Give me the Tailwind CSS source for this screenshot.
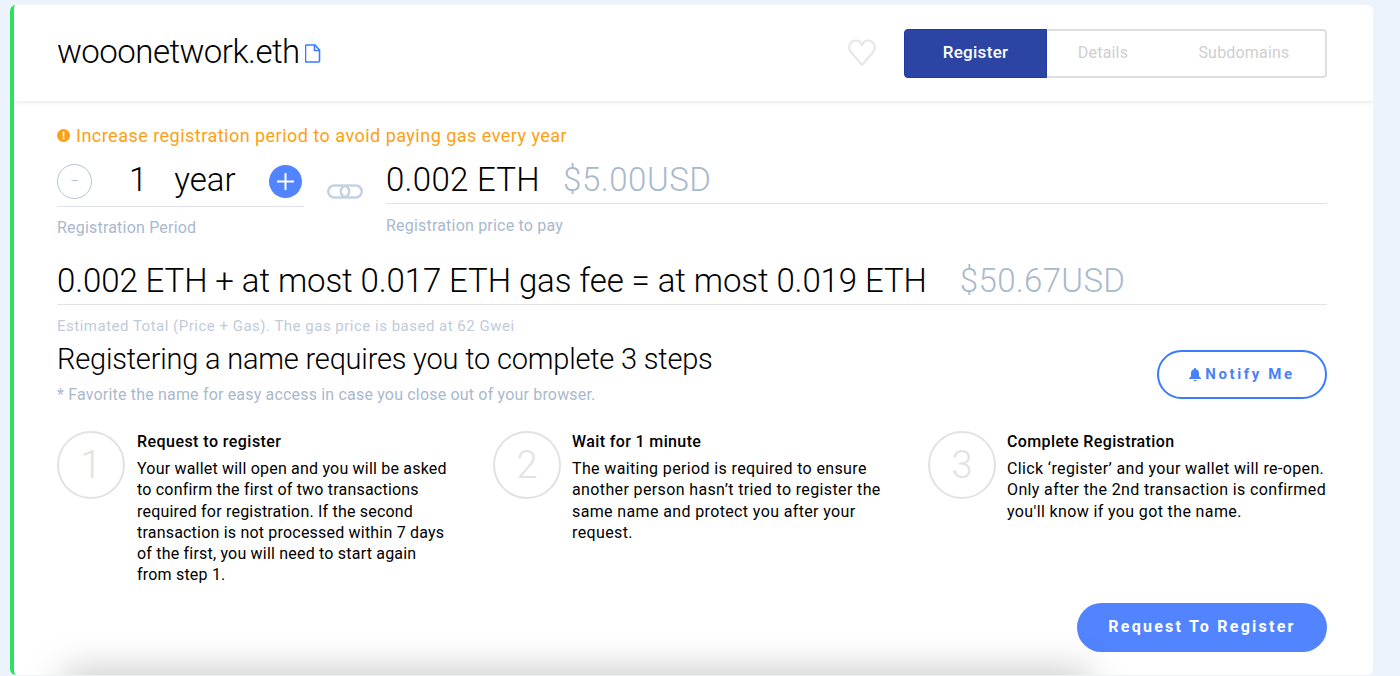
<!doctype html>
<html><head><meta charset="utf-8"><script src="https://cdn.jsdelivr.net/npm/@tailwindcss/browser@4"></script></head>
<body class="m-0">
<div class="w-[1400px] h-[676px] overflow-hidden bg-[#edf3fa] pt-[5px] pl-[10px] font-['Roboto',sans-serif] text-black">
  <div class="relative w-[1363px] h-[670px] bg-white rounded-[6px] border-l-[4px] border-[#2be25c] overflow-hidden">
    <header class="h-[96px] flex items-center pl-[43px] pr-[46px] shadow-[0_2px_4px_rgba(0,0,0,0.08)] relative z-10 bg-white">
      <h1 class="text-[33px] font-light tracking-[-0.53px] leading-none -mt-[4px]">wooonetwork.eth</h1>
      <svg class="ml-[5px]" width="16" height="19" viewBox="0 0 16 19" fill="none" stroke="#3a7bff" stroke-width="1.6"><path d="M1.500 1h8.500l4.500 5v11a1 1 0 0 1-1 1h-12a1 1 0 0 1-1-1v-15a1 1 0 0 1 1-1z"/><path d="M9.500 1v5.500h5"/></svg>
      <svg class="ml-auto" width="30" height="30" viewBox="0 0 30 30" fill="none" stroke="#e7e7e7" stroke-width="2.2"><path d="M15 27 L3.500 13.500 C0 8 4 2.500 9 2.500 C12 2.500 14 4.500 15 7 C16 4.500 18 2.500 21 2.500 C26 2.500 30 8 26.500 13.500 Z" stroke-linejoin="round"/></svg>
      <div class="ml-[27px] w-[423px] h-[49px] flex rounded-[4px] border-2 border-[#dfdfdf] text-[16px] tracking-[0.2px]">
        <div class="w-[143px] -m-[2px] mr-0 bg-[#2c44a3] border border-[#1f3aa0] rounded-l-[4px] text-white text-[17px] tracking-[0.3px] font-medium flex items-center justify-center">Register</div>
        <div class="w-[112px] flex items-center justify-center text-[#cfcfcf]">Details</div>
        <div class="flex-1 flex items-center justify-center pl-[4px] text-[#cfcfcf]">Subdomains</div>
      </div>
    </header>
    <main class="pl-[43px] pr-[46px]">
      <p class="mt-[22px] h-[24px] flex items-center gap-[6px] text-[#fd9f12] text-[18px] tracking-[0.48px]">
        <svg width="13" height="13" viewBox="0 0 13 13"><circle cx="6.500" cy="6.500" r="6.500" fill="#fd9f12"/><rect x="5.600" y="2.500" width="1.800" height="5" fill="#fff"/><rect x="5.600" y="8.500" width="1.800" height="1.800" fill="#fff"/></svg>
        Increase registration period to avoid paying gas every year
      </p>
      <div class="flex mt-[9px]">
        <div class="w-[247px]">
          <div class="h-[51px] flex items-center border-b border-[#dfe3e8] pb-[1px]">
            <span class="mt-[1px] w-[35px] h-[35px] rounded-full border border-[#b4c3d6] text-[#a9b9cd] flex items-center justify-center text-[16px] font-light">−</span>
            <span class="ml-[37px] text-[33px] font-light leading-none -mt-[2px]">1</span>
            <span class="ml-[27px] text-[33px] font-light leading-none -mt-[2px]">year</span>
            <span class="mt-[1px] ml-auto mr-[2px] w-[33px] h-[33px] rounded-full bg-[#5284ff] flex items-center justify-center"><svg width="17" height="17" viewBox="0 0 17 17" stroke="#fff" stroke-width="2"><path d="M8.500 0v17M0 8.500h17"/></svg></span>
          </div>
          <p class="mt-[9px] text-[16px] text-[#a9b9cd] tracking-[0.2px]">Registration Period</p>
        </div>
        <svg class="ml-[23px] mt-[28px]" width="36" height="15" viewBox="0 0 36 15" fill="none" stroke="#c5d2e3" stroke-width="2.500"><rect x="1.250" y="1.500" width="21" height="12" rx="6"/><rect x="13.750" y="1.500" width="21" height="12" rx="6"/></svg>
        <div class="ml-[23px] flex-1">
          <div class="h-[48px] border-b border-[#dfe3e8] flex items-center text-[33px] font-light leading-none tracking-[0.3px]">
            <span>0.002 ETH</span><span class="ml-[23px] text-[#a9b9cd] tracking-[0.55px]">$5.00USD</span>
          </div>
          <p class="mt-[10px] text-[16px] text-[#a9b9cd] tracking-[0.2px]">Registration price to pay</p>
        </div>
      </div>
      <div class="mt-[16px] h-[49px] border-b border-[#dfe3e8] flex items-center text-[33px] font-light leading-none tracking-[-0.1px]">
        <span>0.002 ETH + at most 0.017 ETH gas fee = at most 0.019 ETH</span><span class="ml-[33px] text-[#a9b9cd] tracking-[0.35px]">$50.67USD</span>
      </div>
      <p class="mt-[11px] text-[15px] text-[#bfcbdb] leading-[20px] tracking-[0.5px]">Estimated Total (Price + Gas). The gas price is based at 62 Gwei</p>
      <div class="flex items-start">
        <div>
          <h2 class="text-[29px] font-light leading-[36px] tracking-[-0.2px] mt-[5px]">Registering a name requires you to complete 3 steps</h2>
          <p class="mt-[8px] text-[16px] text-[#a9b9cd] leading-[20px] tracking-[0.18px]">* Favorite the name for easy access in case you close out of your browser.</p>
        </div>
        <button class="ml-auto mt-[14px] w-[170px] h-[49px] pb-[1px] rounded-full border-2 border-[#3a7bff] text-[#4a80f8] font-bold text-[15px] tracking-[2.6px] flex items-center justify-center gap-[4px]">
          <svg width="12" height="13" viewBox="0 0 12 13" fill="#4a80f8"><path d="M6 0a1 1 0 0 1 1 1.200c2 .5 3 2 3 4v3l2 2v.8H0v-.8l2-2v-3c0-2 1-3.500 3-4A1 1 0 0 1 6 0zM4.500 12h3a1.500 1.500 0 0 1-3 0z"/></svg>
          Notify Me
        </button>
      </div>
      <section class="grid grid-cols-[436px_435px_1fr] mt-[26px]">
        <div class="flex"><div class="w-[68px] h-[68px] shrink-0 rounded-full border-2 border-[#e2e2e2] text-[#e2e2e2] text-[38px] flex items-center justify-center font-light">1</div>
          <div class="ml-[12px] w-[316px] text-[16px] leading-[21.200px] tracking-[0.2px]"><h3 class="font-medium tracking-[0.45px] mb-[6px]">Request to register</h3><p>Your wallet will open and you will be asked to confirm the first of two transactions required for registration. If the second transaction is not processed within 7 days of the first, you will need to start again from step 1.</p></div></div>
        <div class="flex"><div class="w-[68px] h-[68px] shrink-0 rounded-full border-2 border-[#e2e2e2] text-[#e2e2e2] text-[38px] flex items-center justify-center font-light">2</div>
          <div class="ml-[11px] w-[320px] text-[16px] leading-[21.200px] tracking-[0.37px]"><h3 class="font-medium mb-[6px]">Wait for 1 minute</h3><p>The waiting period is required to ensure another person hasn’t tried to register the same name and protect you after your request.</p></div></div>
        <div class="flex"><div class="w-[68px] h-[68px] shrink-0 rounded-full border-2 border-[#e2e2e2] text-[#e2e2e2] text-[38px] flex items-center justify-center font-light">3</div>
          <div class="ml-[11px] w-[322px] text-[16px] leading-[21.200px] tracking-[0.37px]"><h3 class="font-medium mb-[6px]">Complete Registration</h3><p>Click ‘register’ and your wallet will re-open. Only after the 2nd transaction is confirmed you'll know if you got the name.</p></div></div>
      </section>
    </main>
    <button class="absolute right-[46px] top-[598px] w-[250px] h-[49px] pb-[2px] rounded-full bg-[#5284ff] text-white font-bold text-[16px] tracking-[2.25px]">Request To Register</button>
    <div class="absolute left-[50px] top-[664px] w-[1025px] h-[50px] bg-black/20 blur-[18px]"></div>
  </div>
</div>
</body></html>
